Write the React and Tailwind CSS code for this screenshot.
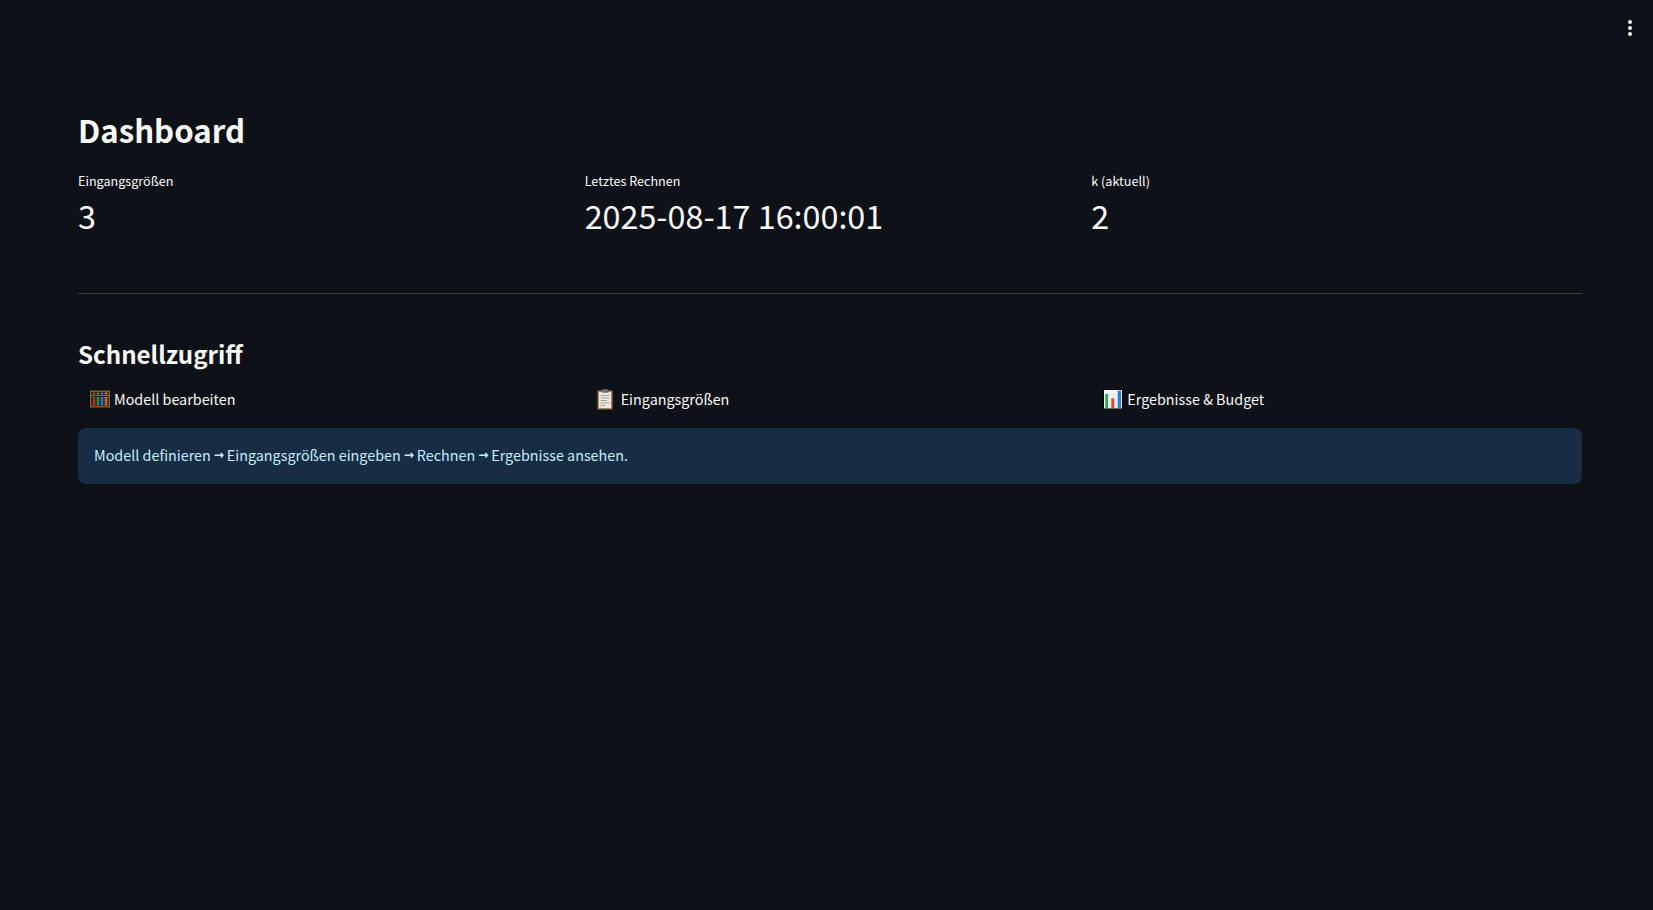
const AbacusIcon = () => (
  <svg width="22" height="18" viewBox="0 0 22 18" className="shrink-0 -mx-[1px]">
    <rect x="0" y="0" width="22" height="18" fill="#000" />
    <rect x="1.7" y="1.2" width="18.6" height="15.6" fill="#17100c" stroke="#8f6238" strokeWidth="1.4" />
    {[
      ['#c9402f', 5],
      ['#2fa053', 9],
      ['#2f84d6', 13],
      ['#dd7a2c', 17],
    ].map(([color, x]) => (
      <g key={x}>
        <rect x={x - 1.4} y="2.5" width="2.8" height="2" fill={color} />
        <rect x={x - 1.4} y="7" width="2.8" height="8.5" fill={color} />
        <g stroke="#17100c" strokeWidth="0.4">
          <line x1={x - 1.4} y1="9.2" x2={x + 1.4} y2="9.2" />
          <line x1={x - 1.4} y1="11.3" x2={x + 1.4} y2="11.3" />
          <line x1={x - 1.4} y1="13.4" x2={x + 1.4} y2="13.4" />
        </g>
      </g>
    ))}
    <rect x="2" y="5.2" width="18" height="0.9" fill="#a87a4a" />
  </svg>
);

const ClipboardIcon = () => (
  <svg width="20" height="21" viewBox="0 0 20 21" className="shrink-0">
    <rect x="0.4" y="1.5" width="15.2" height="19" rx="1" fill="#a9825c" stroke="#4f3a2a" strokeWidth="0.6" />
    <rect x="2" y="3" width="12" height="16" fill="#ece9e2" />
    <rect x="4.5" y="0.3" width="7" height="3.4" rx="0.6" fill="#6d6f74" />
    <g stroke="#a3a3a3" strokeWidth="1">
      <line x1="3.5" y1="6.5" x2="12.5" y2="6.5" />
      <line x1="3.5" y1="9" x2="12.5" y2="9" />
      <line x1="3.5" y1="11.5" x2="10" y2="11.5" />
      <line x1="3.5" y1="14" x2="12.5" y2="14" />
      <line x1="3.5" y1="16.5" x2="8" y2="16.5" />
    </g>
  </svg>
);

const ChartIcon = () => (
  <svg width="20" height="20" viewBox="0 0 20 20" className="shrink-0 -ml-[0.6px] mr-[0.6px]">
    <rect x="0" y="0" width="20" height="20" fill="#000" />
    <rect x="1" y="1" width="18" height="18.4" fill="#f4f4f4" />
    <g stroke="#d8d8d8" strokeWidth="0.6">
      <line x1="1" y1="6" x2="19" y2="6" />
      <line x1="1" y1="11" x2="19" y2="11" />
      <line x1="1" y1="16" x2="19" y2="16" />
    </g>
    <rect x="2.3" y="5" width="2.8" height="14.3" fill="#22b14c" />
    <rect x="8.3" y="9.3" width="3" height="10" fill="#e8432e" />
    <rect x="14.7" y="1.7" width="3.3" height="17.6" fill="#2680d8" />
  </svg>
);

const metrics = [
  { label: 'Eingangsgrößen', value: '3' },
  { label: 'Letztes Rechnen', value: '2025-08-17 16:00:01' },
  { label: 'k (aktuell)', value: '2' },
];

const links = [
  { label: 'Modell bearbeiten', icon: <AbacusIcon /> },
  { label: 'Eingangsgrößen', icon: <ClipboardIcon /> },
  { label: 'Ergebnisse & Budget', icon: <ChartIcon /> },
];

const Arrow = () => <span className="font-['DejaVu_Sans',sans-serif] font-bold text-[12px] leading-none">→</span>;

export default function App() {
  return (
    <div className="relative min-h-[910px] bg-[#0e1117] text-[#fafafa] font-['Noto_Sans_CJK_SC','Noto_Sans',sans-serif]">
      <div className="absolute top-[20px] right-[21px] flex flex-col gap-[2px]">
        <span className="w-[4px] h-[4px] rounded-full bg-[#fafafa]" />
        <span className="w-[4px] h-[4px] rounded-full bg-[#fafafa]" />
        <span className="w-[4px] h-[4px] rounded-full bg-[#fafafa]" />
      </div>
      <main className="pl-[78px] pr-[71px] pt-[106px]">
        <h1 className="text-[31.2px] leading-[48px] font-semibold">Dashboard</h1>
        <div className="grid grid-cols-3 gap-4 mt-[17px]">
          {metrics.map((metric) => (
            <div key={metric.label}>
              <div className="text-[12.6px] leading-[20px]">{metric.label}</div>
              <div className="text-[32.3px] leading-[50px] -mt-[1px]">{metric.value}</div>
            </div>
          ))}
        </div>
        <hr className="mt-[53px] border-0 border-t border-[#fafafa33]" />
        <h2 className="mt-[42px] text-[24.1px] leading-[36px] font-semibold">Schnellzugriff</h2>
        <div className="grid grid-cols-3 gap-4 mt-[7px]">
          {links.map((link) => (
            <div key={link.label} className="flex items-center gap-[4px] h-[40px] px-[12px]">
              {link.icon}
              <span className="text-[14.35px]">{link.label}</span>
            </div>
          ))}
        </div>
        <div className="mt-[9px] h-[56px] pb-[2px] flex items-center gap-[3px] px-4 rounded-lg bg-[#172d43] text-[#c7ebff] text-[14.35px]">
          <span>Modell definieren</span>
          <Arrow />
          <span>Eingangsgrößen eingeben</span>
          <Arrow />
          <span>Rechnen</span>
          <Arrow />
          <span>Ergebnisse ansehen.</span>
        </div>
      </main>
    </div>
  );
}
